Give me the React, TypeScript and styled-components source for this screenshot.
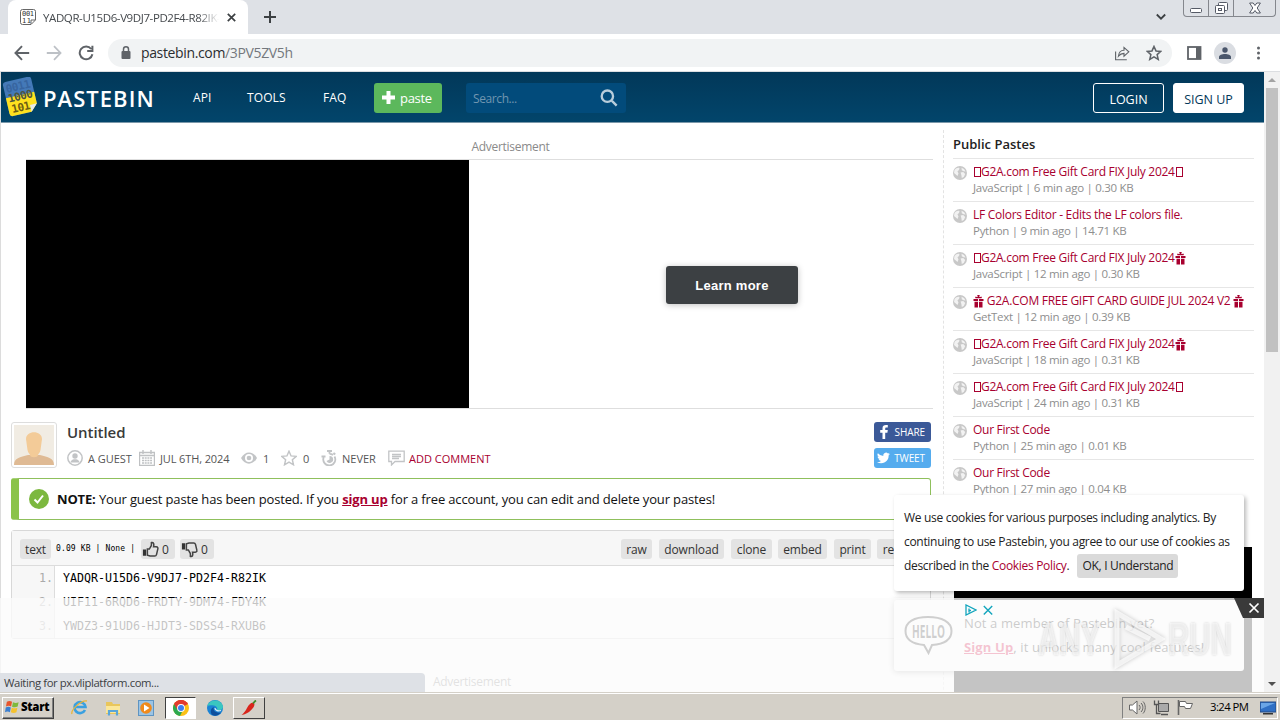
import React from "react";
import styled, { createGlobalStyle } from "styled-components";

const Global = createGlobalStyle`
  * { box-sizing: border-box; }
  body { margin: 0; background: #fff; font-family: "Open Sans", "Noto Sans", sans-serif; }
  svg { display: block; flex: none; }
`;

const Screen = styled.div`
  width: 1280px;
  height: 720px;
  display: flex;
  flex-direction: column;
  overflow: hidden;
`;

/* ---------- browser chrome ---------- */
const TabStrip = styled.div`
  height: 34px;
  background: #dee1e6;
  display: flex;
  align-items: stretch;
  padding-left: 8px;
`;
const Tab = styled.div`
  width: 240px;
  background: #fff;
  border-radius: 8px 8px 0 0;
  display: flex;
  align-items: center;
  justify-content: space-between;
  padding: 0 12px 0 12px;
`;
const TabTitle = styled.div`
  width: 176px;
  margin-right: auto;
  margin-left: 7px;
  overflow: hidden;
  white-space: nowrap;
  font-size: 11.5px;
  letter-spacing: -0.4px;
  color: #45494d;
  -webkit-mask-image: linear-gradient(90deg, #000 155px, transparent 176px);
  mask-image: linear-gradient(90deg, #000 155px, transparent 176px);
`;
const NewTab = styled.div`
  width: 44px;
  display: flex;
  align-items: center;
  justify-content: center;
`;
const StripEnd = styled.div`
  margin-left: auto;
  display: flex;
  align-items: flex-start;
  padding-right: 4px;
`;
const Chevron = styled.div`
  padding: 13px 17px 0 0;
`;
const WinButtons = styled.div`
  display: flex;
  height: 17px;
  border: 1px solid #84878d;
  border-top: 0;
  border-radius: 0 0 4px 4px;
`;
const WinButton = styled.div<{ $w: number }>`
  width: ${(p) => p.$w}px;
  display: flex;
  align-items: center;
  justify-content: center;
  & + & { border-left: 1px solid #84878d; }
`;
const Toolbar = styled.div`
  height: 38px;
  background: #fff;
  border-bottom: 1px solid #dcdee1;
  display: flex;
  align-items: center;
  padding: 0 11px 0 14px;
`;
const NavIcons = styled.div`
  display: flex;
  gap: 16px;
`;
const Omnibox = styled.div`
  flex: 1;
  height: 28px;
  margin: 0 15px 0 14px;
  border-radius: 14px;
  background: #f1f3f4;
  display: flex;
  align-items: center;
  padding: 0 10px 0 12px;
`;
const Url = styled.div`
  margin-left: 9px;
  flex: 1;
  font-size: 14px;
  letter-spacing: -0.36px;
  color: #2b2d30;
  span { color: #74787d; }
`;
const OmniIcons = styled.div`
  display: flex;
  align-items: center;
  gap: 16px;
`;
const ToolIcons = styled.div`
  display: flex;
  align-items: center;
  gap: 12px;
`;
const Avatar = styled.div`
  width: 22px;
  height: 22px;
  border-radius: 50%;
  background: #dadde2;
  display: flex;
  align-items: center;
  justify-content: center;
`;

/* ---------- page ---------- */
const Viewport = styled.div`
  height: 620px;
  display: flex;
  position: relative;
  overflow: hidden;
`;
const Page = styled.div`
  width: 1264px;
  height: 620px;
  overflow: hidden;
  border-left: 1px solid #dcdcdc;
`;
const ScrollBar = styled.div`
  width: 16px;
  background: #f1f1f1;
  display: flex;
  flex-direction: column;
  align-items: center;
`;
const ScrollArrow = styled.div`
  height: 16px;
  display: flex;
  align-items: center;
`;
const Thumb = styled.div`
  width: 12px;
  height: 264px;
  background: #c1c1c1;
  margin-bottom: auto;
`;
const Header = styled.div`
  height: 51px;
  margin-left: -1px;
  background: linear-gradient(#023859, #02456b);
  border-bottom: 1px solid #7b98aa;
  display: flex;
  align-items: center;
  padding: 2px 20px 0 2px;
`;
const Brand = styled.div`
  width: 191px;
  height: 40px;
  margin-top: -2px;
  display: flex;
  align-items: center;
`;
const BrandName = styled.span`
  margin: 1px 0 0 5px;
  font-size: 22px;
  font-weight: 600;
  letter-spacing: 1.05px;
  color: #fff;
`;
const NavLink = styled.div<{ $w: number }>`
  width: ${(p) => p.$w}px;
  margin-top: -2px;
  font-size: 12px;
  letter-spacing: 0.1px;
  color: #fff;
`;
const PasteButton = styled.div`
  width: 68px;
  height: 30px;
  border-radius: 3px;
  background: #5cb85c;
  display: flex;
  align-items: center;
  padding: 0 0 1px 8px;
  gap: 5px;
  font-size: 13px;
  letter-spacing: -0.3px;
  color: #fff;
`;
const SearchBox = styled.div`
  width: 160px;
  height: 30px;
  margin-left: 24px;
  border-radius: 3px;
  background: #024b7b;
  display: flex;
  align-items: center;
  justify-content: space-between;
  padding: 0 8px 0 7px;
`;
const SearchHint = styled.span`
  font-size: 12px;
  letter-spacing: -0.4px;
  color: #7196b0;
`;
const AuthButtons = styled.div`
  margin-left: auto;
  display: flex;
  gap: 9px;
`;
const AuthButton = styled.div<{ $solid?: boolean }>`
  width: 71px;
  height: 30px;
  border: 1px solid #fff;
  border-radius: 3px;
  background: ${(p) => (p.$solid ? "#fff" : "transparent")};
  color: ${(p) => (p.$solid ? "#023859" : "#fff")};
  font-size: 12.5px;
  line-height: 31px;
  text-align: center;
  white-space: nowrap;
`;
const Columns = styled.div`
  display: flex;
  align-items: flex-start;
`;
const Main = styled.div`
  width: 942px;
  padding: 7px 12px 0 10px;
`;
const AdLabel = styled.div`
  height: 29px;
  padding-left: 79px;
  text-align: center;
  font-size: 12px;
  letter-spacing: -0.3px;
  line-height: 33px;
  color: #8a8a8a;
`;
const AdBox = styled.div`
  height: 250px;
  margin: 0 -2px 0 15px;
  border: 1px solid #dedede;
  border-width: 1px 0;
  display: flex;
`;
const AdVideo = styled.div`
  width: 443px;
  background: #000;
`;
const AdSide = styled.div`
  flex: 1;
  padding: 106px 0 0 197px;
`;
const LearnMore = styled.div`
  width: 132px;
  height: 38px;
  border-radius: 3px;
  background: #3c4043;
  box-shadow: 0 1px 6px rgba(0, 0, 0, 0.25);
  color: #fff;
  font: bold 13px/39px "Liberation Sans", sans-serif;
  letter-spacing: 0.25px;
  text-align: center;
`;
const PasteInfo = styled.div`
  height: 69px;
  padding-top: 13px;
  display: flex;
`;
const UserPic = styled.div`
  width: 46px;
  height: 46px;
  border: 1px solid #ddd;
  border-radius: 3px;
  background: #fff;
  padding: 2px;
`;
const InfoText = styled.div`
  flex: 1;
  padding-left: 10px;
`;
const PasteTitle = styled.div`
  font-size: 15px;
  line-height: 21px;
  font-weight: 600;
  letter-spacing: -0.05px;
  color: #3a3a3a;
`;
const MetaRow = styled.div`
  display: flex;
  align-items: center;
  height: 18px;
  margin-top: 6px;
`;
const MetaItem = styled.div<{ $w: number; $gap?: number; $link?: boolean; $ls?: number }>`
  width: ${(p) => p.$w}px;
  display: flex;
  align-items: center;
  gap: ${(p) => p.$gap ?? 4}px;
  font-size: 11px;
  letter-spacing: ${(p) => p.$ls ?? 0}px;
  white-space: nowrap;
  color: ${(p) => (p.$link ? "#a8002f" : "#555")};
`;
const Social = styled.div`
  display: flex;
  flex-direction: column;
  gap: 6px;
`;
const SocialButton = styled.div<{ $bg: string }>`
  width: 57px;
  height: 20px;
  border-radius: 3px;
  background: ${(p) => p.$bg};
  display: flex;
  align-items: center;
  justify-content: space-between;
  padding: 0 6px 0 3px;
  font-size: 10px;
  letter-spacing: -0.1px;
  color: #fff;
`;
const Notice = styled.div`
  height: 42px;
  border: 1px solid #8fc05c;
  border-left: 8px solid #8bc34a;
  border-radius: 3px;
  display: flex;
  align-items: center;
  padding-left: 10px;
  font-size: 13px;
  letter-spacing: -0.15px;
  color: #111;
  white-space: pre;
  svg { margin-right: 8px; }
  a { color: #a8002f; font-weight: 700; text-decoration: underline; }
`;
const CodeBox = styled.div`
  height: 109px;
  margin-top: 10px;
  border: 1px solid #d8d8d8;
  border-radius: 3px;
`;
const CodeBar = styled.div`
  height: 35px;
  background: #f7f7f7;
  border-bottom: 1px solid #dcdcdc;
  display: flex;
  align-items: center;
  padding: 2px 0 0 8px;
`;
const CodeStats = styled.div`
  width: 90px;
  padding: 0 0 2px 5px;
  font: 8px "DejaVu Sans Mono", monospace;
  letter-spacing: 0.13px;
  white-space: pre;
  color: #000;
`;
const Chip = styled.div<{ $w: number; $mr: number }>`
  width: ${(p) => p.$w}px;
  height: 20px;
  margin-right: ${(p) => p.$mr}px;
  flex: none;
  border-radius: 3px;
  background: #e3e3e3;
  display: flex;
  align-items: center;
  justify-content: center;
  font-size: 12px;
  letter-spacing: -0.15px;
  color: #333;
  overflow: hidden;
`;
const VoteChip = styled(Chip)`
  justify-content: flex-start;
  gap: 3px;
  padding-left: 1px;
`;
const ChipGroup = styled.div`
  width: 309px;
  margin-left: auto;
  display: flex;
  overflow: hidden;
`;
const CodeLines = styled.div`
  display: flex;
  font: 11.63px/24px "DejaVu Sans Mono", monospace;
`;
const Gutter = styled.div`
  width: 43px;
  height: 72px;
  background: #f7f7f7;
  border-right: 1px solid #ddd;
  padding-right: 1px;
  text-align: right;
  color: #aaa;
`;
const Source = styled.div`
  padding-left: 8px;
  color: #000;
`;
const Sidebar = styled.div`
  width: 321px;
  margin-top: 7px;
  height: 600px;
  border-left: 1px dashed #e3e3e3;
  padding: 0 10px 0 9px;
`;
const SideTitle = styled.div`
  height: 28px;
  font-size: 13px;
  line-height: 29px;
  font-weight: 600;
  color: #222;
`;
const PasteItem = styled.div`
  height: 43px;
  border-top: 1px solid #e6e6e6;
  padding-top: 5px;
  display: flex;
  gap: 6px;
  svg.globe { margin-top: 2px; }
`;
const ItemTitle = styled.div`
  display: flex;
  align-items: center;
  font-size: 12px;
  line-height: 16px;
  letter-spacing: -0.28px;
  color: #a8002f;
  white-space: pre;
`;
const ItemMeta = styled.div`
  font-size: 11.5px;
  line-height: 15px;
  letter-spacing: -0.29px;
  color: #8e8e8e;
  white-space: nowrap;
`;
const Tofu = styled.i`
  width: 7px;
  height: 10px;
  margin: 0 0 0 1px;
  border: 1px solid #a8002f;
`;
const SideAd = styled.div`
  height: 150px;
  margin: 45px 2px 0 1px;
  background: #000;
`;

/* ---------- floating layers ---------- */
const MemberBox = styled.div`
  position: absolute;
  left: 894px;
  top: 528px;
  width: 350px;
  height: 71px;
  background: #fff;
  border-radius: 3px;
  box-shadow: 0 1px 6px rgba(0, 0, 0, 0.4);
  display: flex;
  align-items: center;
  padding: 0 0 2px 10px;
  gap: 11px;
  font-size: 13px;
  letter-spacing: 0.12px;
  line-height: 24px;
  color: #222;
  white-space: nowrap;
  a { color: #d8003c; font-weight: 700; text-decoration: underline; }
`;
const BottomAd = styled.div`
  position: absolute;
  left: 0;
  top: 526px;
  width: 1264px;
  height: 94px;
  background: rgba(251, 251, 251, 0.78);
`;
const AdMarks = styled.div`
  position: absolute;
  left: 965px;
  top: 6px;
  display: flex;
  gap: 6px;
`;
const AdClose = styled.div`
  position: absolute;
  right: 0;
  top: 0;
`;
const Watermark = styled.div`
  position: absolute;
  left: 1038px;
  top: 10px;
  display: flex;
  align-items: center;
  color: rgba(255, 255, 255, 0.6);
  font: 700 46px/62px "Liberation Sans", sans-serif;
  text-shadow: 0 0 3px rgba(0, 0, 0, 0.18);
  svg { filter: drop-shadow(0 0 2px rgba(0, 0, 0, 0.3)); }
`;
const WatermarkWord = styled.div<{ $w: number }>`
  width: ${(p) => p.$w}px;
  white-space: nowrap;
  span { display: inline-block; transform: scaleX(0.64); transform-origin: 0 50%; }
`;
const CookieBox = styled.div`
  position: absolute;
  left: 894px;
  top: 423px;
  width: 350px;
  height: 96px;
  background: #fff;
  border-radius: 3px;
  box-shadow: 2px 2px 4px rgba(0, 0, 0, 0.28);
  padding: 11px 10px;
  font-size: 12px;
  line-height: 24px;
  letter-spacing: -0.31px;
  color: #222;
  white-space: nowrap;
  a { color: #a8002f; }
`;
const CookieLine = styled.div`
  display: flex;
  align-items: center;
  height: 24px;
`;
const OkButton = styled.div`
  width: 101px;
  height: 24px;
  margin-left: 8px;
  border-radius: 3px;
  background: #dadada;
  text-align: center;
`;
const StatusBubble = styled.div`
  position: absolute;
  left: 0;
  bottom: 0;
  width: 425px;
  height: 19px;
  background: #dee1e6;
  border-radius: 0 4px 0 0;
  padding-left: 4px;
  font-size: 11.3px;
  line-height: 20px;
  letter-spacing: -0.4px;
  color: #3c4043;
`;
const LowerLabel = styled.div`
  position: absolute;
  left: 433px;
  top: 600px;
  font-size: 12px;
  line-height: 19px;
  letter-spacing: -0.3px;
  color: #888;
`;

/* ---------- taskbar ---------- */
const Taskbar = styled.div`
  height: 28px;
  background: #d4d0c8;
  border-top: 1px solid #d4d0c8;
  box-shadow: inset 0 1px 0 #fff;
  display: flex;
  align-items: center;
  padding: 4px 2px 2px;
`;
const StartButton = styled.div`
  width: 52px;
  height: 22px;
  border: 1px solid;
  border-color: #fff #404040 #404040 #fff;
  box-shadow: inset -1px -1px 0 #808080;
  display: flex;
  align-items: center;
  gap: 1px;
  padding: 0 0 2px 2px;
  font-size: 11.5px;
  font-weight: 800;
  letter-spacing: -0.3px;
  color: #000;
`;
const QuickIcons = styled.div`
  display: flex;
  align-items: center;
  padding-left: 17px;
  gap: 17px;
  width: 111px;
`;
const TaskButton = styled.div<{ $down?: boolean }>`
  width: ${(p) => (p.$down ? 31 : 32)}px;
  height: 22px;
  display: flex;
  align-items: center;
  justify-content: center;
  background: ${(p) => (p.$down ? "#fff" : "#d4d0c8")};
  border: 1px solid;
  border-color: ${(p) => (p.$down ? "#404040 #fff #fff #404040" : "#fff #404040 #404040 #fff")};
`;
const EdgeSlot = styled.div`
  width: 37px;
  display: flex;
  justify-content: center;
`;
const Tray = styled.div`
  margin-left: auto;
  width: 156px;
  height: 22px;
  border: 1px solid;
  border-color: #808080 #fff #fff #808080;
  display: flex;
  align-items: center;
  padding-left: 6px;
  gap: 7px;
`;
const Clock = styled.div`
  width: 43px;
  margin: -2px 0 0 9px;
  font-size: 11.3px;
  letter-spacing: -0.55px;
  white-space: nowrap;
  color: #000;
`;

const Globe = () => (
  <svg className="globe" width="14" height="14" viewBox="0 0 14 14">
    <circle cx="7" cy="7" r="7" fill="#c8c8c8" />
    <path d="M1.5 4C3 2 5 1.5 6.5 2L6 4 4.5 5.2 5.5 7.5 4.5 10 2.8 8.5 1 7zM8.5 1.8 11 3l1.6 2.4-2-.2-1.8-1zM7.6 6.5l2.6-.4 2 1.8-1.4 3-2 1.2-.4-2.8z" fill="#f2f2f2" />
  </svg>
);
const Gift = () => (
  <svg width="11" height="13" viewBox="0 0 11 13" fill="#a8002f">
    <path d="M.5 4h4.5v2H.5zM6 4h4.500v2H6zM1.500 6.800H5V12.500H1.500zM6 6.800h3.500v5.700H6zM2 1.800 4.800 2 4.200 0h2.600L6.200 2 9 1.800 8.500 3.300h-6z" />
  </svg>
);
const Stroke = ({ d, w = 20, c = "#5f6368", sw = 2, fill = "none" }: { d: string; w?: number; c?: string; sw?: number; fill?: string }) => (
  <svg width={w} height={w} viewBox="0 0 20 20" fill={fill} stroke={c} strokeWidth={sw}>
    <path d={d} />
  </svg>
);
const thumbPath = "M6 9h2.2L10.5 5V1.800c2.400-.5 3.300 1.200 2.400 4.700H16c1.700 0 2 1.300 1.700 2.300l-1.500 6.400c-.3 1.100-1 1.600-2 1.600H9L6 15.800z";
const Thumbs = ({ down }: { down?: boolean }) => (
  <svg width="17" height="17" viewBox="0 0 19 19" fill="none" stroke="#444" strokeWidth="1.7">
    <g transform={down ? "matrix(1 0 0 -1 0 19)" : undefined}>
      <path d={thumbPath} />
      <path d="M1 9.500h3.600v7H1z" fill="#333" stroke="none" />
    </g>
  </svg>
);

const pastes: [React.ReactNode, string][] = [
  [<><Tofu />G2A.com Free Gift Card FIX July 2024<Tofu /></>, "JavaScript | 6 min ago | 0.30 KB"],
  [<>LF Colors Editor - Edits the LF colors file.</>, "Python | 9 min ago | 14.71 KB"],
  [<><Tofu />G2A.com Free Gift Card FIX July 2024<Gift /></>, "JavaScript | 12 min ago | 0.30 KB"],
  [<><Gift /> G2A.COM FREE GIFT CARD GUIDE JUL 2024 V2 <Gift /></>, "GetText | 12 min ago | 0.39 KB"],
  [<><Tofu />G2A.com Free Gift Card FIX July 2024<Gift /></>, "JavaScript | 18 min ago | 0.31 KB"],
  [<><Tofu />G2A.com Free Gift Card FIX July 2024<Tofu /></>, "JavaScript | 24 min ago | 0.31 KB"],
  [<>Our First Code</>, "Python | 25 min ago | 0.01 KB"],
  [<>Our First Code</>, "Python | 27 min ago | 0.04 KB"],
];

export default function App() {
  return (
    <Screen>
      <Global />
      <TabStrip>
        <Tab>
          <svg width="16" height="16" viewBox="0 0 16 16">
            <path d="M2.500.5h11a2 2 0 0 1 2 2V11L11 15.500H2.500a2 2 0 0 1-2-2v-11a2 2 0 0 1 2-2zM11 15v-4h4" fill="#fff" stroke="#666" />
            <g fontFamily="DejaVu Sans Mono, monospace" fontSize="7" fill="#333">
              <text x="2" y="7.200" textLength="12">001</text>
              <text x="2" y="13.800" textLength="9">11</text>
            </g>
          </svg>
          <TabTitle>YADQR-U15D6-V9DJ7-PD2F4-R82IK-UIF11</TabTitle>
          <svg width="9" height="9" viewBox="0 0 9 9" stroke="#3c4043" strokeWidth="1.7"><path d="M.8.8l7.400 7.400M8.200.8.8 8.200" /></svg>
        </Tab>
        <NewTab>
          <svg width="12" height="12" viewBox="0 0 12 12" stroke="#3c4043" strokeWidth="2"><path d="M6 0v12M0 6h12" /></svg>
        </NewTab>
        <StripEnd>
          <Chevron>
            <svg width="10" height="8" viewBox="0 0 10 8" fill="none" stroke="#3c4043" strokeWidth="1.8"><path d="M.8 1.500 5 5.700l4.200-4.200" /></svg>
          </Chevron>
          <WinButtons>
            <WinButton $w={24}><svg width="12" height="16" viewBox="0 0 12 16" fill="#fff" stroke="#555a66"><rect x=".5" y="8.500" width="11" height="4" rx="1" /></svg></WinButton>
            <WinButton $w={25}>
              <svg width="13" height="15" viewBox="0 0 13 15" fill="#fff" stroke="#555a66"><rect x="3.500" y="1.500" width="9" height="8" rx="1" /><rect x=".5" y="4.500" width="9" height="8" rx="1" /><rect x="3.500" y="7.500" width="3" height="2" /></svg>
            </WinButton>
            <WinButton $w={42}>
              <svg width="12" height="12" viewBox="0 0 12 12" fill="#fff" stroke="#555a66"><path d="M.6 1h3.600L6 3.500 7.800 1h3.600L8.200 6l3.200 5H7.800L6 8.500 4.200 11H.6l3.200-5z" /></svg>
            </WinButton>
          </WinButtons>
        </StripEnd>
      </TabStrip>
      <Toolbar>
        <NavIcons>
          <Stroke w={16} d="M19 10H2M10 1.500 1.800 10l8.200 8.500" sw={2.4} />
          <Stroke w={16} d="M1 10h17M10 1.500l8.200 8.500-8.200 8.500" c="#bdc1c6" sw={2.2} />
          <Stroke w={16} d="M16.500 5A8 8 0 1 0 18 11.500M18 1v6.500h-6.500" sw={2.500} />
        </NavIcons>
        <Omnibox>
          <svg width="12" height="14" viewBox="0 0 12 14"><rect x="1.500" y="5" width="9" height="8" rx="1" fill="#5f6368" /><path d="M3.500 5V3.300a2.500 2.500 0 0 1 5 0V5" fill="none" stroke="#5f6368" strokeWidth="1.500" /></svg>
          <Url>pastebin.com<span>/3PV5ZV5h</span></Url>
          <OmniIcons>
            <Stroke w={16} d="M2 8v10.500h14M5.500 14c.5-5 3-7.500 7-7.500V3l6 5.500-6 5.500v-3.500c-3 0-5 1-7 3.500z" sw={1.400} />
            <Stroke w={16} d="M10 1.800l2.500 5.600 6 .6-4.600 4 1.400 6-5.300-3.200L4.700 18l1.400-6-4.600-4 6-.6z" sw={1.900} />
          </OmniIcons>
        </Omnibox>
        <ToolIcons>
          <svg width="15" height="14" viewBox="0 0 15 14"><rect x="1" y="1" width="12.500" height="12" fill="#fff" stroke="#5f6368" strokeWidth="1.800" /><path d="M9 1h5v12H9z" fill="#5f6368" /></svg>
          <Avatar>
            <svg width="12" height="12" viewBox="0 0 12 12" fill="#4a566b"><circle cx="6" cy="3" r="2.700" /><path d="M0 12V10C0 8 3 7 6 7s6 1 6 3v2z" /></svg>
          </Avatar>
          <svg width="21" height="14" viewBox="0 0 21 14" fill="#5f6368"><circle cx="10.500" cy="2" r="1.500" /><circle cx="10.500" cy="7" r="1.500" /><circle cx="10.500" cy="12" r="1.500" /></svg>
        </ToolIcons>
      </Toolbar>

      <Viewport>
        <Page>
          <Header>
            <Brand>
              <svg width="36" height="40" viewBox="0 0 36 40">
                <g transform="rotate(-13 18 20)">
                  <path d="M7 2h23a3 3 0 0 1 3 3v25l-7 7H7a3 3 0 0 1-3-3V5a3 3 0 0 1 3-3z" fill="#4479b8" />
                  <path d="M4 18h29v12l-7 7H7a3 3 0 0 1-3-3z" fill="#ffe11f" />
                  <path d="M26 37v-7h7z" fill="#e8e8e8" />
                  <g fontFamily="DejaVu Sans Mono, monospace" fontWeight="700" fontSize="11">
                    <text x="6" y="13" fill="#3765a0" textLength="25">0011</text>
                    <text x="6" y="23" fill="#4d5540" textLength="25">1000</text>
                    <text x="7" y="34" fill="#6b5c14" textLength="19">101</text>
                  </g>
                </g>
              </svg>
              <BrandName>PASTEBIN</BrandName>
            </Brand>
            <NavLink $w={54}>API</NavLink>
            <NavLink $w={76}>TOOLS</NavLink>
            <NavLink $w={51}>FAQ</NavLink>
            <PasteButton>
              <svg width="13" height="13" viewBox="0 0 13 13" stroke="#fff" strokeWidth="4"><path d="M6.500 0v13M0 6.500h13" /></svg>
              paste
            </PasteButton>
            <SearchBox>
              <SearchHint>Search...</SearchHint>
              <Stroke w={18} d="M13 13l5.500 5.500M14.500 8a6.300 6.300 0 1 1-12.600 0 6.300 6.300 0 0 1 12.600 0z" c="#b9cddb" sw={2.600} />
            </SearchBox>
            <AuthButtons>
              <AuthButton>LOGIN</AuthButton>
              <AuthButton $solid>SIGN UP</AuthButton>
            </AuthButtons>
          </Header>
          <Columns>
            <Main>
              <AdLabel>Advertisement</AdLabel>
              <AdBox>
                <AdVideo />
                <AdSide><LearnMore>Learn more</LearnMore></AdSide>
              </AdBox>
              <PasteInfo>
                <UserPic>
                  <svg width="40" height="40" viewBox="0 0 40 40">
                    <path d="M0 0h40v40H0z" fill="#f1ece3" />
                    <path d="M0 40c0-7 6-8 14-10h12c8 2 14 3 14 10z" fill="#dfba94" />
                    <path d="M12 14c0-9 16-9 16 0l-1.500 11c-.5 3-2.500 4-2.500 5 0 3-8 3-8 0 0-1-2-2-2.500-5z" fill="#f3cb98" />
                  </svg>
                </UserPic>
                <InfoText>
                  <PasteTitle>Untitled</PasteTitle>
                  <MetaRow>
                    <MetaItem $w={72} $gap={5} $ls={-0.05}>
                      <svg width="16" height="16" viewBox="0 0 16 16"><circle cx="8" cy="8" r="7.200" fill="#fff" stroke="#c2c4c6" strokeWidth="1.500" /><circle cx="8" cy="6" r="2.700" fill="#c2c4c6" /><path d="M3.500 12.500c0-2 2-3 3.500-3.200h2c1.500.2 3.500 1.200 3.500 3.200z" fill="#c2c4c6" /></svg>
                      A GUEST
                    </MetaItem>
                    <MetaItem $w={102} $gap={5} $ls={-0.12}>
                      <svg width="16" height="16" viewBox="0 0 16 16" fill="none" stroke="#bfc1c3"><path d="M.5 2.500h15v13H.5zM.5 5.500h15M4 0v4M12 0v4" strokeWidth="1.400" /><path d="M3 8h10M3 10.500h10M3 13h10" strokeWidth="1.500" strokeDasharray="2 .7" /></svg>
                      JUL 6TH, 2024
                    </MetaItem>
                    <MetaItem $w={40} $gap={6}>
                      <svg width="16" height="12" viewBox="0 0 16 12"><path d="M0 6C4-1.500 12-1.500 16 6 12 13.500 4 13.500 0 6z" fill="#c2c4c6" /><circle cx="8" cy="6" r="4" fill="#fff" /><circle cx="8" cy="6" r="2.300" fill="#c2c4c6" /></svg>
                      1
                    </MetaItem>
                    <MetaItem $w={40} $gap={6}>
                      <Stroke w={16} d="M10 1.500l2.600 5.900 6.400.6-4.800 4.200 1.400 6.300L10 15.200l-5.600 3.300 1.400-6.300L1 8l6.400-.6z" c="#c2c4c6" sw={1.800} />
                      0
                    </MetaItem>
                    <MetaItem $w={67} $gap={5}>
                      <svg width="16" height="16" viewBox="0 0 16 16" fill="none" stroke="#c2c4c6" strokeWidth="1.800"><path d="M2.600 7.500A6 6 0 1 0 13.500 6.500M.5 6.500h4M6 1h5M8.500 1v2.800M8.500 3.800C10 3.800 11 4 12 5M12.500 2.800l1.700 1.700" /><path d="M8.500 6A3.500 3.500 0 1 1 5.500 11L8.500 9.500z" fill="#c2c4c6" stroke="none" /></svg>
                      NEVER
                    </MetaItem>
                    <MetaItem $w={110} $gap={4} $link>
                      <svg width="17" height="16" viewBox="0 0 17 16" fill="none" stroke="#c2c4c6" strokeWidth="1.300"><path d="M.8 1.200h15.400v10.300H7l-3.500 3.500v-3.500H.8zM4 4.500h9M4 6.500h9M4 8.500h7" /></svg>
                      ADD COMMENT
                    </MetaItem>
                  </MetaRow>
                </InfoText>
                <Social>
                  <SocialButton $bg="#3b5998">
                    <svg width="14" height="16" viewBox="0 0 14 16" fill="#fff"><path d="M5.500 15V8.700H3.200V6h2.300V4.200C5.500 2 6.800 1 9 1h1.800v2.500H9.400c-.9 0-1.200.4-1.200 1.200V6h2.600l-.4 2.700H8.200V15z" /></svg>
                    SHARE
                  </SocialButton>
                  <SocialButton $bg="#55acee">
                    <svg width="13" height="12" viewBox="0 0 24 20" fill="#fff"><path d="M24 2.400a10 10 0 0 1-2.800.8A5 5 0 0 0 23.300.5a10 10 0 0 1-3.100 1.200A4.900 4.900 0 0 0 11.800 6.200 14 14 0 0 1 1.700 1a4.900 4.900 0 0 0 1.500 6.600A5 5 0 0 1 1 7v.1a4.900 4.900 0 0 0 3.900 4.800 5 5 0 0 1-2.200.1 4.900 4.900 0 0 0 4.600 3.400A9.900 9.900 0 0 1 0 17.500a14 14 0 0 0 21.500-12.400A10 10 0 0 0 24 2.400z" /></svg>
                    TWEET
                  </SocialButton>
                </Social>
              </PasteInfo>
              <Notice>
                <svg width="20" height="20" viewBox="0 0 20 20"><circle cx="10" cy="10" r="10" fill="#7cb83f" /><path d="M5.500 10.500l3 3 5.500-7" fill="none" stroke="#fff" strokeWidth="2" /></svg>
                <span><b>NOTE:</b> Your guest paste has been posted. If you <a>sign up</a> for a free account, you can edit and delete your pastes!</span>
              </Notice>
              <CodeBox>
                <CodeBar>
                  <Chip $w={31} $mr={0}>text</Chip>
                  <CodeStats>0.09 KB | None |</CodeStats>
                  <VoteChip $w={34} $mr={5}><Thumbs />0</VoteChip>
                  <VoteChip $w={34} $mr={0}><Thumbs down />0</VoteChip>
                  <ChipGroup>
                    <Chip $w={31} $mr={7}>raw</Chip>
                    <Chip $w={65} $mr={7}>download</Chip>
                    <Chip $w={41} $mr={6}>clone</Chip>
                    <Chip $w={49} $mr={7}>embed</Chip>
                    <Chip $w={37} $mr={6}>print</Chip>
                    <Chip $w={46} $mr={0}>report</Chip>
                  </ChipGroup>
                </CodeBar>
                <CodeLines>
                  <Gutter>1.<br />2.<br />3.</Gutter>
                  <Source>YADQR-U15D6-V9DJ7-PD2F4-R82IK<br />UIF11-6RQD6-FRDTY-9DM74-FDY4K<br />YWDZ3-91UD6-HJDT3-SDSS4-RXUB6</Source>
                </CodeLines>
              </CodeBox>
            </Main>
            <Sidebar>
              <SideTitle>Public Pastes</SideTitle>
              {pastes.map(([title, meta], i) => (
                <PasteItem key={i}>
                  <Globe />
                  <div>
                    <ItemTitle>{title}</ItemTitle>
                    <ItemMeta>{meta}</ItemMeta>
                  </div>
                </PasteItem>
              ))}
              <SideAd />
            </Sidebar>
          </Columns>
        </Page>
        <ScrollBar>
          <ScrollArrow><svg width="8" height="4" viewBox="0 0 8 4"><path d="M0 4 4 0l4 4z" fill="#a3a3a3" /></svg></ScrollArrow>
          <Thumb />
          <ScrollArrow><svg width="8" height="4" viewBox="0 0 8 4"><path d="M0 0h8L4 4z" fill="#505050" /></svg></ScrollArrow>
        </ScrollBar>

        <LowerLabel>Advertisement</LowerLabel>
        <MemberBox>
          <svg width="49" height="40" viewBox="0 0 49 40">
            <path d="M24 2C10 2 1.500 7 1.500 16S9 29 20 30l4.500 8L28 30c11-.8 19.500-5 19.500-14S38 2 24 2z" fill="#fff" stroke="#333" strokeWidth="2" />
            <text x="8" y="22.500" fontFamily="Open Sans, sans-serif" fontSize="17" fontWeight="700" fill="#333" textLength="33" lengthAdjust="spacingAndGlyphs">HELLO</text>
          </svg>
          <div>Not a member of Pastebin yet?<br /><a>Sign Up</a>, it unlocks many cool features!</div>
        </MemberBox>
        <BottomAd>
          <Watermark>
            <WatermarkWord $w={72}><span>ANY</span></WatermarkWord>
            <svg width="58" height="62" viewBox="0 0 56 62" fill="rgba(255,255,255,.1)" stroke="rgba(255,255,255,.7)" strokeWidth="5"><path d="M6 5v52l44-26zM15 19l24 12" /></svg>
            <WatermarkWord $w={66}><span>RUN</span></WatermarkWord>
          </Watermark>
          <AdMarks>
            <svg width="12" height="12" viewBox="0 0 12 12" fill="none" stroke="#12a5bd" strokeWidth="1.300"><path d="M1 1v10l10-5zM4 4.500v4M4 6.500h2" /></svg>
            <svg width="10" height="12" viewBox="0 0 10 12" stroke="#12a5bd" strokeWidth="1.400"><path d="M.8 2l8.400 8.400M9.200 2 .8 10.400" /></svg>
          </AdMarks>
          <AdClose>
            <svg width="30" height="20" viewBox="0 0 30 20"><path d="M0 0h30v20H9z" fill="#3a3a3a" /><path d="M15.500 5.500l9 9M24.500 5.500l-9 9" stroke="#fff" strokeWidth="1.700" /></svg>
          </AdClose>
        </BottomAd>
        <CookieBox>
          <CookieLine>We use cookies for various purposes including analytics. By</CookieLine>
          <CookieLine>continuing to use Pastebin, you agree to our use of cookies as</CookieLine>
          <CookieLine>described in the&nbsp;<a>Cookies Policy</a>. <OkButton>OK, I Understand</OkButton></CookieLine>
        </CookieBox>
        <StatusBubble>Waiting for px.vliplatform.com...</StatusBubble>
      </Viewport>

      <Taskbar>
        <StartButton>
          <svg width="15" height="15" viewBox="0 0 16 16">
            <path d="M2 3c2-1.300 4-1 5.500 0L6.500 8C5 7 3 7 1 8z" fill="#e8552b" /><path d="M8.500 3.500c2 1 4 1 6 0L13.500 8c-2 1-4 1-6 .2z" fill="#7fb93c" />
            <path d="M.8 9c2-1.300 4-1 5.400 0l-1 5c-1.500-1-3.500-1-5.200 0z" fill="#3b7fd0" /><path d="M7.200 9.200c2 1 4 1 6 0l-1 5c-2 1-4 1-6 0z" fill="#f5c22e" />
          </svg>
          Start
        </StartButton>
        <QuickIcons>
          <svg width="17" height="17" viewBox="0 0 17 17" fill="none"><path d="M14 11a5.500 5.500 0 1 1 .5-3H4.500" stroke="#3aa0e0" strokeWidth="2.600" /><path d="M1 15C-.5 11 10 1 16 2" stroke="#e8b53a" strokeWidth="1.300" /></svg>
          <svg width="16" height="16" viewBox="0 0 16 16"><path d="M1 2h6l1 2h7v10H1z" fill="#e9c65c" /><path d="M1 6h14v7H1z" fill="#fbe79a" /><path d="M4 15.500v-4.500h8v4.500" fill="none" stroke="#5aa6d8" strokeWidth="2.200" /></svg>
          <svg width="16" height="16" viewBox="0 0 16 16"><rect x=".5" y=".5" width="15" height="15" fill="#9cc4e4" stroke="#5e94c2" /><circle cx="8" cy="8" r="5.800" fill="#f08a1c" /><path d="M6 4.500v7L11.500 8z" fill="#fff" /></svg>
        </QuickIcons>
        <TaskButton $down>
          <svg width="16" height="16" viewBox="0 0 16 16"><circle cx="8" cy="8" r="8" fill="#fbc116" /><path d="M8 8 1.100 4A8 8 0 0 1 14.900 4z" fill="#e33b2e" /><path d="M8 8 1.100 4a8 8 0 0 0 5.900 12l3-6z" fill="#2da94f" /><path d="M1.100 4A8 8 0 0 1 14.900 4.100H8L4.500 10z" fill="#e33b2e" /><circle cx="8" cy="8" r="3.900" fill="#fff" /><circle cx="8" cy="8" r="3" fill="#3d7ff0" /></svg>
        </TaskButton>
        <EdgeSlot>
          <svg width="16" height="16" viewBox="0 0 16 16"><circle cx="8" cy="8" r="8" fill="#1b83d4" /><path d="M.3 6C2-1 14-2 16 6.500c.2 3.500-4 4.500-6 3.500 1-2-.5-4-3-4.500C4 5 2 5 .3 6z" fill="#3ac6c0" /><path d="M7 7c-1.500 3 1 6.500 7 5.500-2 3-6 4-8.500 2.500S3 8 7 7z" fill="#0f4f9c" /><path d="M8 8c0 2 2.500 3.500 6 2.500" stroke="#d8ecf4" strokeWidth="1.200" fill="none" /></svg>
        </EdgeSlot>
        <TaskButton>
          <svg width="17" height="16" viewBox="0 0 17 16"><path d="M13 3c1.500 2-1 6-5 9-3 2-6 3-7.500 3 2-1.500 4-4 5.500-7 2-4 4.500-6 7-5z" fill="#d9261c" /><path d="M12 3.500c1-1 1.500-2 3-3" stroke="#3e8d2b" strokeWidth="1.800" fill="none" /></svg>
        </TaskButton>
        <Tray>
          <svg width="17" height="15" viewBox="0 0 17 15" fill="#fff" stroke="#666"><path d="M.5 5h3L8 1v13l-4.500-4h-3z" /><path d="M10 5c1.500 1.500 1.500 3.500 0 5M12 3c2.500 2.500 2.500 6.500 0 9M14 1.500c3 3 3 9 0 12" fill="none" /></svg>
          <svg width="17" height="16" viewBox="0 0 17 16" fill="#fff" stroke="#555"><path d="M5.500 3.500h10v8h-10z" fill="#aaa" /><path d="M1.500.5v4h4v-4M3.500 4.500v9h4M8 14.500h7" fill="none" strokeWidth="1.300" /></svg>
          <svg width="17" height="15" viewBox="0 0 17 15" fill="#fff" stroke="#666"><path d="M1.500 0v15" strokeWidth="1.600" /><path d="M2.500 1.500h6l1 2h6l-2 5h-5l-1-2h-5z" /></svg>
          <Clock>3:24 PM</Clock>
          <svg width="16" height="14" viewBox="0 0 16 14"><rect x="0" y="1" width="16" height="10" fill="#2f6fc4" stroke="#234a85" /><path d="M1 2h14L1 8z" fill="#6aa5e6" /><path d="M3 12h10v1.500H3z" fill="#333" /></svg>
        </Tray>
      </Taskbar>
    </Screen>
  );
}
